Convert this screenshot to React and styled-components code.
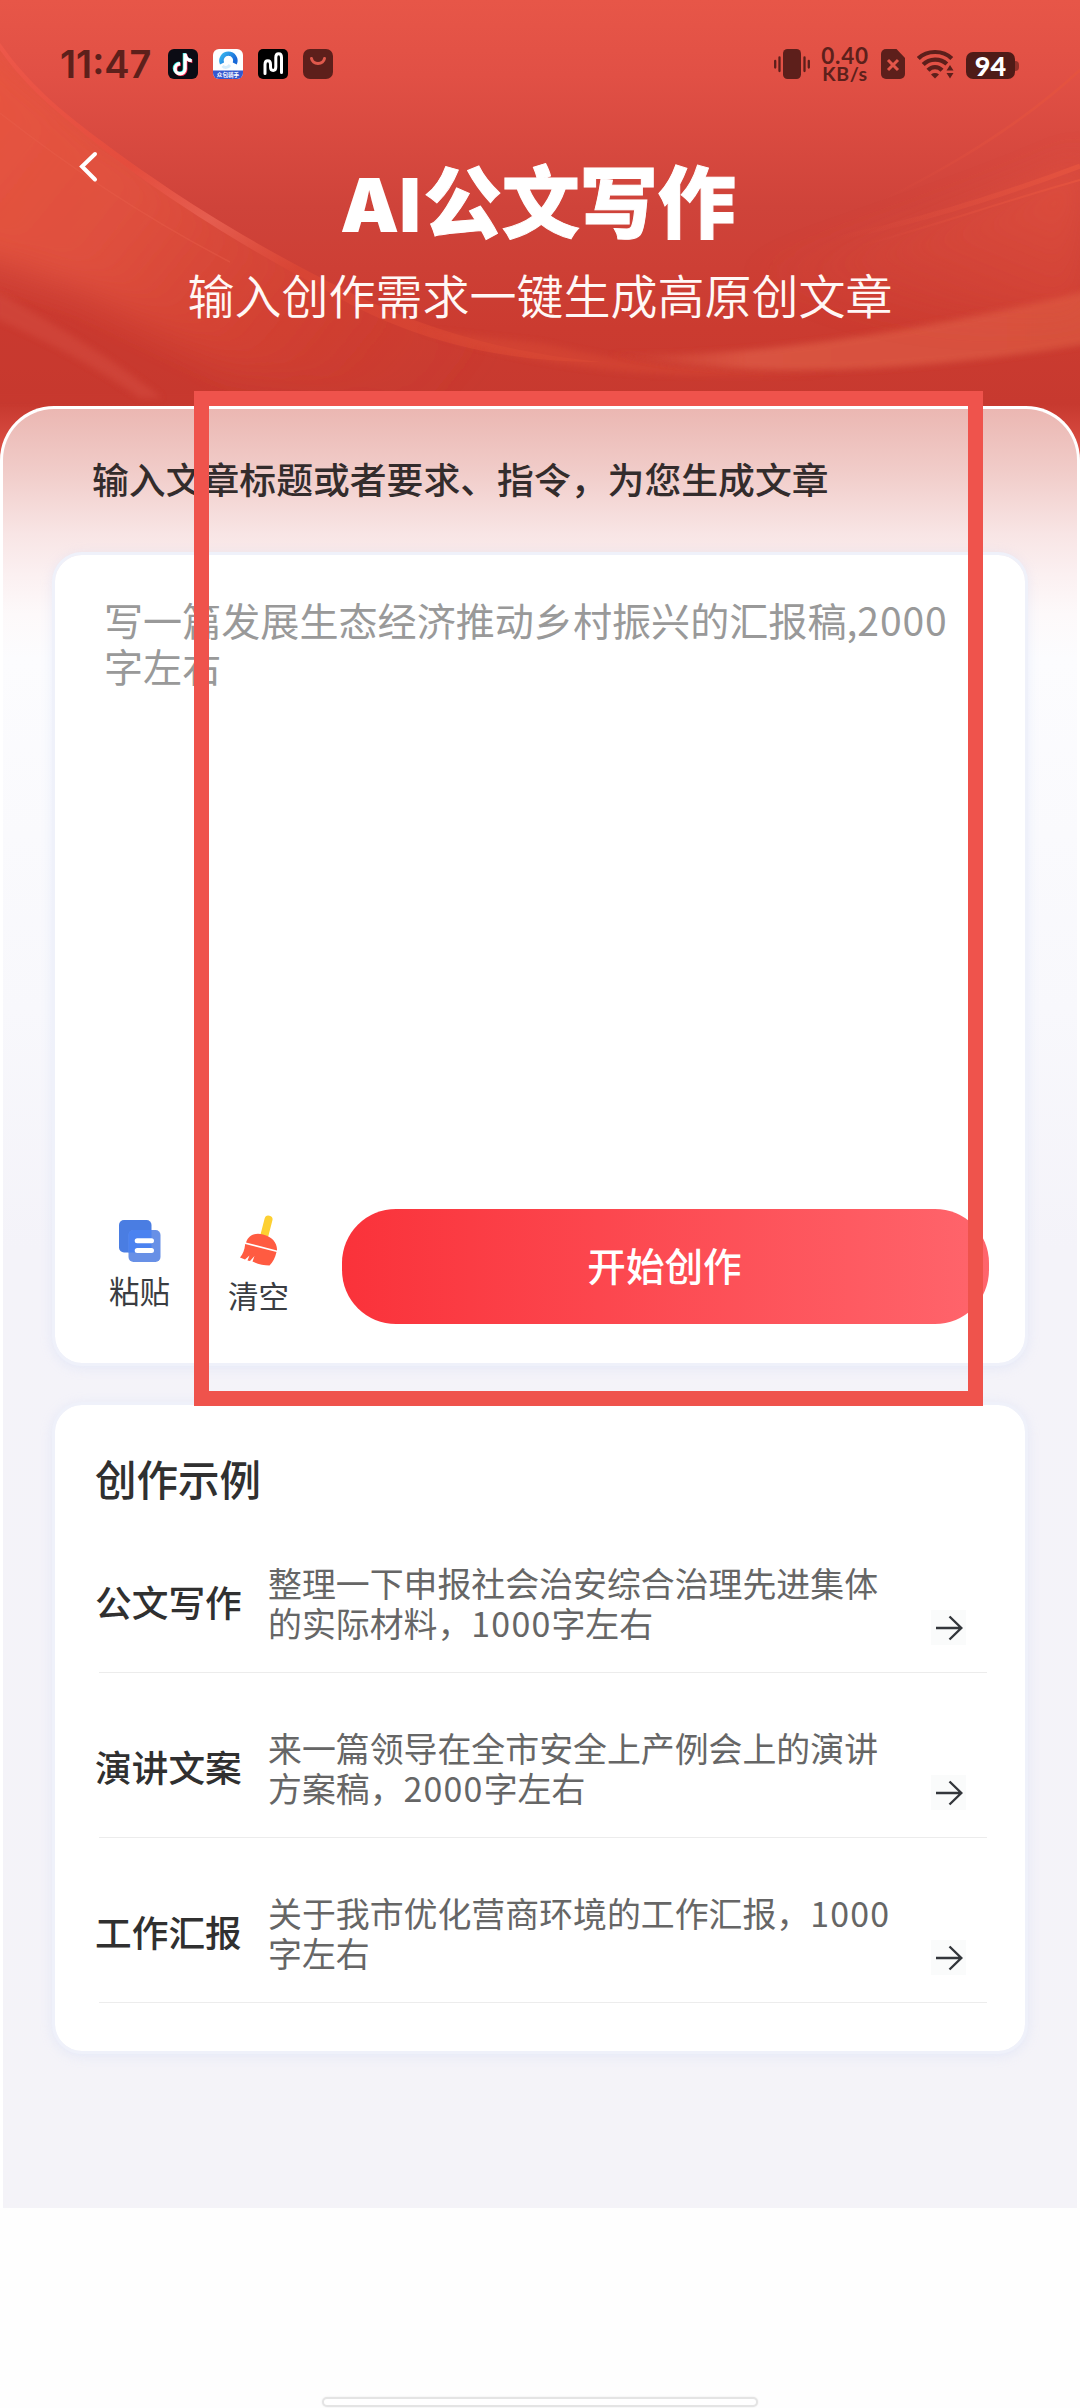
import React from 'react';
import styled, { createGlobalStyle } from 'styled-components';

const GlobalStyle = createGlobalStyle`
  * {
    box-sizing: border-box;
  }

  body {
    margin: 0;
    background: #fff;
    font-family: 'Noto Sans CJK SC', 'Noto Sans', sans-serif;
    -webkit-font-smoothing: antialiased;
  }
`;

const Page = styled.div`
  position: relative;
  width: 1080px;
  height: 2408px;
  display: flex;
  flex-direction: column;
  background: #fefefe;
  overflow: hidden;
`;

const Backdrop = styled.svg`
  position: absolute;
  left: 0;
  top: 0;
  display: block;
`;

const Header = styled.header`
  position: relative;
  height: 406px;
  flex: none;
`;

const StatusBar = styled.div`
  display: flex;
  justify-content: space-between;
  align-items: center;
  height: 40px;
  margin-top: 44px;
  padding: 0 61px 0 60px;
  color: #5d201b;
`;

const StatusGroup = styled.div`
  display: flex;
  align-items: center;
`;

const Time = styled.span`
  width: 108px;
  font-family: Inter, sans-serif;
  font-size: 38px;
  font-weight: 600;
  line-height: 40px;
  letter-spacing: 0;
  white-space: nowrap;
`;

const AppIcon = styled.svg`
  display: block;
  margin-right: 15px;
`;

const Speed = styled.div`
  display: flex;
  flex-direction: column;
  align-items: center;
  width: 50px;
  margin: 0 11px 0 10px;
  font-family: Lato, sans-serif;
  font-weight: 700;
  white-space: nowrap;
`;

const SpeedValue = styled.span`
  font-size: 22.5px;
  line-height: 19px;
  letter-spacing: 0.8px;
`;

const SpeedUnit = styled.span`
  font-size: 19.5px;
  line-height: 18px;
  letter-spacing: 0.6px;
`;

const Wifi = styled.svg`
  display: block;
  margin-left: 12px;
`;

const Battery = styled.div`
  display: flex;
  align-items: center;
  margin-left: 11px;
  margin-top: 3px;
`;

const BatteryBody = styled.span`
  width: 49px;
  height: 27px;
  border-radius: 7px;
  background: #4f1b17;
  color: #fff;
  font-family: Lato, sans-serif;
  font-size: 27px;
  font-weight: 900;
  line-height: 27px;
  text-align: center;
`;

const BatteryTip = styled.span`
  width: 4px;
  height: 10px;
  border-radius: 0 4px 4px 0;
  background: #8f3029;
`;

const BackIcon = styled.svg`
  display: block;
  margin: 65px 0 0 76px;
`;

const Title = styled.h1`
  margin: -32px 0 0;
  padding-right: 4px;
  color: #fff;
  font-size: 78px;
  font-weight: 900;
  line-height: 90px;
  text-align: center;
  -webkit-text-stroke: 1px #fff;
`;

const TitleLatin = styled.span`
  font-family: Inter, sans-serif;
  font-size: 74px;
  margin-right: 3px;
  -webkit-text-stroke: 0;
`;

const Subtitle = styled.p`
  margin: 14px 0 0;
  color: #fff8f6;
  font-size: 47px;
  font-weight: 350;
  line-height: 60px;
  text-align: center;
`;

const Panel = styled.main`
  position: relative;
  display: flex;
  flex-direction: column;
  height: 1802px;
  flex: none;
  border: 3px solid #fff;
  border-bottom: 0;
  border-radius: 54px 54px 0 0;
  background: linear-gradient(
    #ebb7b2 0,
    #f1cdca 65px,
    #f8e5e5 125px,
    #fbf0f1 165px,
    #fdf9fa 205px,
    #fcfcfe 250px,
    #f8f8fc 600px,
    #f4f3f9 840px,
    #f4f3f8 100%
  );
`;

const PanelLabel = styled.h2`
  margin: 45px 0 0 89px;
  color: #332c2c;
  font-size: 36.85px;
  font-weight: 500;
  line-height: 48px;
`;

const Card = styled.section`
  display: flex;
  flex-direction: column;
  margin: ${(props) => props.$top}px 49px 0;
  height: ${(props) => props.$height}px;
  border: 3px solid #eff1fa;
  border-radius: 30px;
  background: #fff;
  background-clip: padding-box;
  box-shadow: 0 2px 12px rgba(190, 205, 245, 0.28);
`;

const Prompt = styled.p`
  flex: 1;
  margin: 42px 0 0 49px;
  color: #999;
  font-size: 39.1px;
  line-height: 45.5px;
`;

const Digits = styled.span`
  letter-spacing: ${(props) => props.$gap}px;
`;

const Actions = styled.div`
  display: flex;
  height: 154px;
`;

const Action = styled.div`
  display: flex;
  flex-direction: column;
  align-items: center;
  width: 119px;
  color: #3a3d42;
  font-size: 30.5px;
  line-height: 36px;
`;

const PasteAction = styled(Action)`
  padding-top: 11px;
  margin-left: 25px;
  gap: 10px;
`;

const ClearAction = styled(Action)`
  padding-top: 6px;
  gap: 11px;
`;

const StartButton = styled.button`
  width: 647px;
  height: 115px;
  margin: 0 0 0 24px;
  padding: 0 2px 4px 0;
  border: 0;
  border-radius: 54px;
  background: linear-gradient(90deg, #fa323a, #ff656c);
  color: #fff;
  font-family: inherit;
  font-size: 38.6px;
  font-weight: 500;
  line-height: 111px;
`;

const ExamplesTitle = styled.h3`
  margin: 48px 0 0 40px;
  color: #303030;
  font-size: 41.5px;
  font-weight: 500;
  line-height: 50px;
`;

const Examples = styled.ul`
  margin: 5px 38px 0 40px;
  padding: 0;
  list-style: none;
`;

const Example = styled.li`
  position: relative;
  display: flex;
  height: 165px;

  &::after {
    content: '';
    position: absolute;
    left: 4px;
    right: 0;
    bottom: 0;
    height: 1px;
    background: #ececec;
  }
`;

const ExampleName = styled.span`
  width: 173px;
  padding-top: 69px;
  color: #303030;
  font-size: 36.7px;
  font-weight: 500;
  line-height: 48px;
  white-space: nowrap;
`;

const ExampleText = styled.p`
  width: 640px;
  margin: 0;
  padding-top: 55px;
  color: #666;
  font-size: 33.9px;
  line-height: 40px;
`;

const ArrowBox = styled.span`
  display: flex;
  align-items: center;
  justify-content: center;
  width: 35px;
  height: 35px;
  margin: 102px 0 0 23px;
  background: #fafbfb;
`;

const HomeBar = styled.div`
  width: 436px;
  height: 10px;
  margin: 189px auto 0;
  border: 2px solid #e4e4e4;
  border-radius: 6px;
  background: #fff;
  box-shadow: 0 0 2px #e8e8e8;
`;

// Selection rectangle drawn over the finished page
const Marker = styled.div`
  position: absolute;
  left: 194px;
  top: 391px;
  width: 789px;
  height: 1015px;
  border: 15px solid #ef534c;
`;

const examples = [
  {
    name: '公文写作',
    lines: ['整理一下申报社会治安综合治理先进集体', '的实际材料，', '1000', '字左右'],
  },
  {
    name: '演讲文案',
    lines: ['来一篇领导在全市安全上产例会上的演讲', '方案稿，', '2000', '字左右'],
  },
  {
    name: '工作汇报',
    lines: ['关于我市优化营商环境的工作汇报，', '', '1000', '字左右'],
  },
];

const Ribbons = () => (
  <Backdrop width="1080" height="470" viewBox="0 0 1080 470">
    <defs>
      <linearGradient id="base" x1="0" y1="0" x2="0" y2="1">
        <stop offset="0" stopColor="#e75648" />
        <stop offset="0.16" stopColor="#e15045" />
        <stop offset="0.44" stopColor="#cf433a" />
        <stop offset="0.7" stopColor="#cb3b30" />
        <stop offset="0.86" stopColor="#c7392f" />
        <stop offset="1" stopColor="#e4584d" />
      </linearGradient>
      <linearGradient id="sweep" x1="0" y1="0" x2="1" y2="0.6">
        <stop offset="0" stopColor="#e8553f" />
        <stop offset="0.45" stopColor="#e2523f" stopOpacity="0.85" />
        <stop offset="1" stopColor="#d8432f" stopOpacity="0.1" />
      </linearGradient>
      <linearGradient id="edge" x1="0" y1="0" x2="1" y2="1">
        <stop offset="0" stopColor="#ee584b" stopOpacity="0.9" />
        <stop offset="0.3" stopColor="#e64b3c" stopOpacity="0.7" />
        <stop offset="0.45" stopColor="#ea6558" stopOpacity="0.7" />
        <stop offset="0.6" stopColor="#dc4634" stopOpacity="0.6" />
        <stop offset="1" stopColor="#dc4a34" stopOpacity="0.6" />
      </linearGradient>
      <linearGradient id="right" x1="0" y1="0" x2="1" y2="0">
        <stop offset="0" stopColor="#dc5542" stopOpacity="0" />
        <stop offset="0.3" stopColor="#dc5844" />
        <stop offset="1" stopColor="#da5741" />
      </linearGradient>
      <linearGradient id="fan" x1="0" y1="1" x2="1" y2="0">
        <stop offset="0.2" stopColor="#e1503e" stopOpacity="0" />
        <stop offset="1" stopColor="#e5533f" stopOpacity="0.9" />
      </linearGradient>
      <filter id="soft" x="-20%" y="-20%" width="140%" height="140%">
        <feGaussianBlur stdDeviation="16" />
      </filter>
      <filter id="slight" x="-10%" y="-10%" width="120%" height="120%">
        <feGaussianBlur stdDeviation="3" />
      </filter>
      <clipPath id="underArc">
        <path d="M0 43C28 83 60 110 96 137C140 170 220 227 331 283C400 318 480 350 560 366L560 470H0Z" />
      </clipPath>
    </defs>
    <rect width="1080" height="470" fill="url(#base)" />
    <g clipPath="url(#underArc)">
      <path
        d="M-40 20L100 130L330 270L480 335L420 410L230 370L80 290L-40 250Z"
        fill="url(#sweep)"
        filter="url(#soft)"
      />
      <path
        d="M-20 290C40 300 150 345 230 400L-20 400Z"
        fill="#c7392f"
        filter="url(#slight)"
        opacity="0.4"
      />
      <path
        d="M-5 290C45 320 105 352 162 398L140 398C95 366 45 340 -5 318Z"
        fill="#d3483c"
        filter="url(#slight)"
        opacity="0.65"
      />
    </g>
    <path
      d="M0 43C28 83 60 110 96 137C140 170 220 227 331 283C400 318 480 350 600 362C480 362 390 330 322 288C240 246 145 184 97 144C60 114 28 90 0 50Z"
      fill="url(#edge)"
    />
    <path d="M0 113C60 160 140 215 230 262" fill="none" stroke="#e9604c" strokeWidth="1.5" opacity="0.4" />
    <path
      d="M420 330C520 362 640 385 840 372C700 378 600 356 540 343Z"
      fill="#d94a35"
      opacity="0.55"
      filter="url(#slight)"
    />
    <path
      d="M600 352C700 362 880 342 1090 290V343C960 366 760 386 600 352Z"
      fill="url(#right)"
      filter="url(#slight)"
      opacity="0.85"
    />
    <path
      d="M690 285C840 250 980 205 1085 160V310C980 335 850 320 690 285Z"
      fill="url(#fan)"
      filter="url(#soft)"
      opacity="0.75"
    />
    <path d="M820 230C920 185 1010 135 1080 70" fill="none" stroke="url(#fan)" strokeWidth="2.5" />
    <path d="M760 252C880 235 990 200 1080 166" fill="none" stroke="url(#fan)" strokeWidth="5" />
    <path d="M800 262C900 238 990 205 1080 180" fill="none" stroke="url(#fan)" strokeWidth="2" />
  </Backdrop>
);

const StatusApps = () => (
  <>
    <AppIcon width="30" height="30" viewBox="0 0 30 30">
      <rect width="30" height="30" rx="6" fill="#0b0b14" />
      <g fill="none" strokeWidth="3.4">
        <path d="M16.4 4V19.2A5 5 0 1 1 11.4 14.2M16.4 5C17 8.5 19.5 11 23 11" stroke="#25e6e0" />
        <path d="M17.8 5.2V20.4A5 5 0 1 1 12.8 15.4M17.8 6.2C18.4 9.7 21 12.2 24.4 12.2" stroke="#fb2c55" />
        <path d="M17.1 4.5V19.8A5 5 0 1 1 12.1 14.8M17.1 5.5C17.8 9 20.2 11.6 23.8 11.6" stroke="#fff" />
      </g>
    </AppIcon>
    <AppIcon width="30" height="30" viewBox="0 0 30 30">
      <defs>
        <linearGradient id="ring" x1="0" y1="0" x2="1" y2="0.6">
          <stop offset="0" stopColor="#37b4ee" />
          <stop offset="1" stopColor="#1668d8" />
        </linearGradient>
        <clipPath id="appClip">
          <rect width="30" height="30" rx="6" />
        </clipPath>
      </defs>
      <g clipPath="url(#appClip)">
        <rect width="30" height="30" fill="#fdfeff" />
        <path d="M9 14.5A7 7 0 1 1 21.8 14.5" fill="none" stroke="url(#ring)" strokeWidth="4.4" />
        <path d="M9.5 17C12 19.5 15 18.5 17 16" fill="none" stroke="#d5ecfb" strokeWidth="3" />
        <path d="M0 21.5H30V30H0Z" fill="#3558cf" />
        <text x="15" y="28.4" fill="#fff" fontSize="5.6" fontWeight="700" textAnchor="middle">
          众包骑手
        </text>
      </g>
    </AppIcon>
    <AppIcon width="30" height="30" viewBox="0 0 30 30">
      <rect width="30" height="30" rx="5" fill="#000" />
      <path
        d="M7 24.5V15.5C7 10.5 12.5 10.5 12.5 15.5V18C12.5 22.5 17.8 22.5 17.8 18V8.5C17.8 3.5 23.5 3.5 23.5 8.5V23.5"
        fill="none"
        stroke="#fff"
        strokeWidth="3"
        strokeLinecap="round"
      />
    </AppIcon>
    <AppIcon width="30" height="30" viewBox="0 0 30 30">
      <rect width="30" height="30" rx="7" fill="#5d1f1b" />
      <path d="M8.5 9.5C10 16 20 16 21.5 9.5" fill="none" stroke="#e0594c" strokeWidth="3" strokeLinecap="round" />
    </AppIcon>
  </>
);

const VibrateIcon = () => (
  <svg width="36" height="30" viewBox="0 0 36 30">
    <rect x="9" width="18" height="30" rx="4.5" fill="#5d1f1b" />
    <path
      d="M5.5 8.5V22M1.2 12V18.5M30.5 8.5V22M34.8 12V18.5"
      stroke="#5d1f1b"
      strokeWidth="2.3"
      strokeLinecap="round"
    />
  </svg>
);

const SimIcon = () => (
  <svg width="24" height="30" viewBox="0 0 24 30">
    <path d="M5 0H15.5L24 9V25A5 5 0 0 1 19 30H5A5 5 0 0 1 0 25V5A5 5 0 0 1 5 0Z" fill="#5d1f1b" />
    <path d="M7 11L17 21M17 11L7 21" stroke="#e4564a" strokeWidth="3" />
  </svg>
);

const WifiIcon = () => (
  <Wifi width="38" height="30" viewBox="0 0 38 30">
    <g fill="none" stroke="#5d1f1b" strokeWidth="4.2">
      <path d="M1.3 9.5C10 0.8 26 0.8 34.8 9.5" />
      <path d="M6.2 15.5C12.5 9 23.5 9 29.8 15" />
      <path d="M11 21.2C15 17 21 17 25 21.2" />
    </g>
    <path d="M18 29.5L14 25.5C16.5 23.6 19.5 23.6 22 25.5Z" fill="#5d1f1b" />
    <path d="M29.5 21.5L33 16L36.5 21.5ZM29.5 24L33 29.5L36.5 24Z" fill="#5d1f1b" />
  </Wifi>
);

const PasteIcon = () => (
  <svg width="42" height="42" viewBox="0 0 42 42">
    <rect width="32.5" height="32.5" rx="5" fill="#4a7de2" />
    <rect x="9.5" y="10" width="32" height="32" rx="5" fill="#6890e6" />
    <path d="M14.5 10H32.5V27.5A5 5 0 0 1 27.5 32.5H9.5V15A5 5 0 0 1 14.5 10Z" fill="#4b82f0" />
    <path d="M18.2 20.8H32.5M18.2 30.5H32.5" stroke="#fff" strokeWidth="5" strokeLinecap="round" />
  </svg>
);

const BroomIcon = () => (
  <svg width="40" height="51" viewBox="0 0 40 51">
    <path d="M29.5 4.5L25.5 20" stroke="#fdd032" strokeWidth="8" strokeLinecap="round" />
    <path d="M7 27.5C9.5 20 16 17.5 24 19.5C33 21.5 38.5 28 38 35.5Z" fill="#ff5b41" />
    <path
      d="M6.2 29L37.5 37C36 43 34 47 30.5 50.5C25 50.5 19 49 13.5 46.5L15.5 41L11 46L8.5 45.5L10.5 40.5L6 44.5L1 42.5C4 39 5.5 35 6.2 29Z"
      fill="#ff5b41"
    />
  </svg>
);

const ArrowIcon = () => (
  <svg width="28" height="26" viewBox="0 0 28 26">
    <path d="M1 13H26M14.5 1.5L26.3 13L14.5 24.5" fill="none" stroke="#33363b" strokeWidth="2.4" />
  </svg>
);

const App = () => {
  return (
    <Page>
      <GlobalStyle />
      <Ribbons />
      <Header>
        <StatusBar>
          <StatusGroup>
            <Time>11:47</Time>
            <StatusApps />
          </StatusGroup>
          <StatusGroup>
            <VibrateIcon />
            <Speed>
              <SpeedValue>0.40</SpeedValue>
              <SpeedUnit>KB/s</SpeedUnit>
            </Speed>
            <SimIcon />
            <WifiIcon />
            <Battery>
              <BatteryBody>94</BatteryBody>
              <BatteryTip />
            </Battery>
          </StatusGroup>
        </StatusBar>
        <BackIcon width="24" height="36" viewBox="0 0 24 36">
          <path d="M19 5L6 17.5L19 30.5" fill="none" stroke="#fff" strokeWidth="4" strokeLinecap="round" />
        </BackIcon>
        <Title>
          <TitleLatin>AI</TitleLatin>公文写作
        </Title>
        <Subtitle>输入创作需求一键生成高原创文章</Subtitle>
      </Header>
      <Panel>
        <PanelLabel>输入文章标题或者要求、指令，为您生成文章</PanelLabel>
        <Card $top={50} $height={814}>
          <Prompt>
            写一篇发展生态经济推动乡村振兴的汇报稿,<Digits $gap={0.9}>2000</Digits>
            <br />
            字左右
          </Prompt>
          <Actions>
            <PasteAction>
              <PasteIcon />
              粘贴
            </PasteAction>
            <ClearAction>
              <BroomIcon />
              清空
            </ClearAction>
            <StartButton>开始创作</StartButton>
          </Actions>
        </Card>
        <Card $top={36} $height={652}>
          <ExamplesTitle>创作示例</ExamplesTitle>
          <Examples>
            {examples.map(({ name, lines: [first, second, count, rest] }) => (
              <Example key={name}>
                <ExampleName>{name}</ExampleName>
                <ExampleText>
                  {first}
                  {second && <br />}
                  {second}
                  <Digits $gap={1.2}>{count}</Digits>
                  {!second && <br />}
                  {rest}
                </ExampleText>
                <ArrowBox>
                  <ArrowIcon />
                </ArrowBox>
              </Example>
            ))}
          </Examples>
        </Card>
      </Panel>
      <HomeBar />
      <Marker />
    </Page>
  );
};

export default App;
